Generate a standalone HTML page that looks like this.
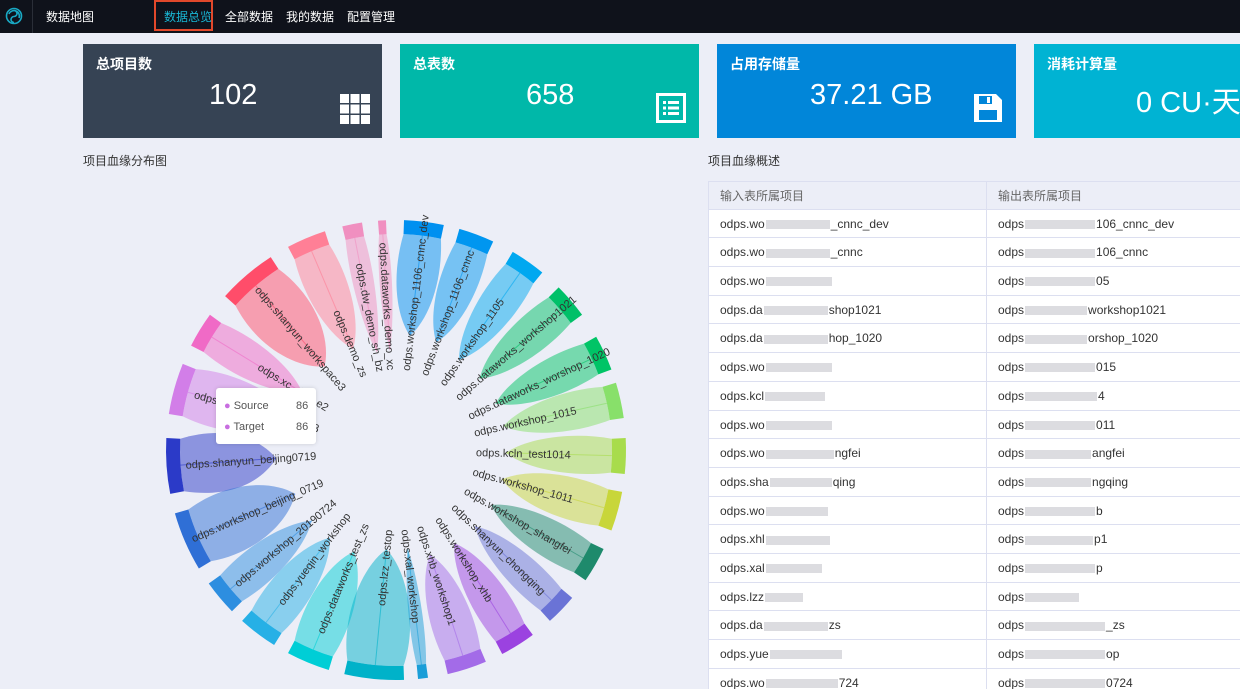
<!DOCTYPE html>
<html><head><meta charset="utf-8"><style>
*{margin:0;padding:0;box-sizing:border-box}
html,body{width:1240px;height:689px;overflow:hidden}
body{background:#eceef7;font-family:"Liberation Sans","Noto Sans CJK SC",sans-serif;position:relative}
.nav{position:absolute;left:0;top:0;width:1240px;height:33px;background:#0f121b;color:#fff;font-size:12px}
.nav .sep{position:absolute;left:32px;top:0;width:1px;height:33px;background:#2a2e38}
.nav span{position:absolute;top:8px}
.card{position:absolute;top:44px;height:94px;color:#fff;overflow:hidden}
.card .t{position:absolute;left:13px;top:10px;font-size:14px;font-weight:bold}
.card .v{position:absolute;top:35px;font-size:29px;white-space:nowrap}
.h{position:absolute;font-size:12px;color:#333}
.tb{position:absolute;left:708px;top:181px;width:540px;font-size:12px;color:#333}
.r{height:28.7px;border-bottom:1px solid #dcdff0;background:#fff;position:relative;white-space:nowrap;line-height:28px}
.r.hd{background:#eceef7;color:#666;border-top:1px solid #dcdff0}
.c1{position:absolute;left:0;top:0;width:279px;height:28px;padding-left:11px;border-left:1px solid #dcdff0;border-right:1px solid #dcdff0}
.c2{position:absolute;left:290px;top:0}
.b{display:inline-block;height:9px;background:#dcdce0;vertical-align:middle;margin:0 1px}
</style></head><body>
<div class="nav">
<svg style="position:absolute;left:5px;top:7px" width="18" height="18" viewBox="0 0 18 18" fill="none" stroke="#19a9c4" stroke-width="1.6"><circle cx="9" cy="9" r="7.5"/><path d="M9 3.5a3 3 0 0 1 0 6a3 3 0 0 0 0 6M4 7a5 5 0 0 1 10 4"/></svg>
<div class="sep"></div>
<span style="left:46px">数据地图</span>
<div style="position:absolute;left:154px;top:0;width:59px;height:31px;border:2px solid #e2482b"></div>
<span style="left:164px;color:#19b7d6">数据总览</span>
<span style="left:225px">全部数据</span>
<span style="left:286px">我的数据</span>
<span style="left:347px">配置管理</span>
</div>

<div class="card" style="left:83px;width:299px;background:#364354"><div class="t">总项目数</div><div class="v" style="left:126px">102</div>
<svg style="position:absolute;left:257px;top:50px" width="30" height="30"><g fill="#fff"><rect x="0" y="0" width="9" height="9"/><rect x="10.5" y="0" width="9" height="9"/><rect x="21" y="0" width="9" height="9"/><rect x="0" y="10.5" width="9" height="9"/><rect x="10.5" y="10.5" width="9" height="9"/><rect x="21" y="10.5" width="9" height="9"/><rect x="0" y="21" width="9" height="9"/><rect x="10.5" y="21" width="9" height="9"/><rect x="21" y="21" width="9" height="9"/></g></svg></div>
<div class="card" style="left:400px;width:299px;background:#00b8a9"><div class="t">总表数</div><div class="v" style="left:126px">658</div>
<svg style="position:absolute;left:256px;top:49px" width="30" height="30"><rect x="1.5" y="1.5" width="27" height="27" fill="none" stroke="#fff" stroke-width="3"/><g fill="#fff"><rect x="7" y="8" width="3" height="3"/><rect x="12" y="8" width="11" height="3"/><rect x="7" y="13.5" width="3" height="3"/><rect x="12" y="13.5" width="11" height="3"/><rect x="7" y="19" width="3" height="3"/><rect x="12" y="19" width="11" height="3"/></g></svg></div>
<div class="card" style="left:717px;width:299px;background:#0186d9"><div class="t">占用存储量</div><div class="v" style="left:93px">37.21 GB</div>
<svg style="position:absolute;left:257px;top:50px" width="28" height="28"><path d="M0 0H22L28 6V28H0Z" fill="#fff"/><rect x="5" y="2" width="13" height="8" fill="#0186d9"/><rect x="13" y="3" width="3" height="6" fill="#fff"/><rect x="5" y="16" width="18" height="10" fill="#0186d9"/></svg></div>
<div class="card" style="left:1034px;width:206px;background:#00b3d3"><div class="t">消耗计算量</div><div class="v" style="left:102px">0 CU·天</div></div>

<div class="h" style="left:83px;top:152px">项目血缘分布图</div>
<div class="h" style="left:708px;top:152px">项目血缘概述</div>

<svg id="ch" style="position:absolute;left:0;top:0" width="700" height="689"></svg>
<div style="position:absolute;left:216px;top:388px;width:100px;height:56px;background:#fff;border-radius:3px;box-shadow:0 0 4px rgba(0,0,0,.15);font-size:11px;color:#555">
<div style="position:absolute;left:8px;top:12px"><span style="color:#c86ee0">●</span> Source</div><div style="position:absolute;left:80px;top:12px">86</div>
<div style="position:absolute;left:8px;top:33px"><span style="color:#c86ee0">●</span> Target</div><div style="position:absolute;left:80px;top:33px">86</div></div>

<div class="tb">
<div class="r hd"><div class="c1">输入表所属项目</div><div class="c2">输出表所属项目</div></div>
<div class="r"><div class="c1">odps.wo<i class="b" style="width:64px"></i>_cnnc_dev</div><div class="c2">odps<i class="b" style="width:70px"></i>106_cnnc_dev</div></div>
<div class="r"><div class="c1">odps.wo<i class="b" style="width:64px"></i>_cnnc</div><div class="c2">odps<i class="b" style="width:70px"></i>106_cnnc</div></div>
<div class="r"><div class="c1">odps.wo<i class="b" style="width:66px"></i></div><div class="c2">odps<i class="b" style="width:70px"></i>05</div></div>
<div class="r"><div class="c1">odps.da<i class="b" style="width:64px"></i>shop1021</div><div class="c2">odps<i class="b" style="width:62px"></i>workshop1021</div></div>
<div class="r"><div class="c1">odps.da<i class="b" style="width:64px"></i>hop_1020</div><div class="c2">odps<i class="b" style="width:62px"></i>orshop_1020</div></div>
<div class="r"><div class="c1">odps.wo<i class="b" style="width:66px"></i></div><div class="c2">odps<i class="b" style="width:70px"></i>015</div></div>
<div class="r"><div class="c1">odps.kcl<i class="b" style="width:60px"></i></div><div class="c2">odps<i class="b" style="width:72px"></i>4</div></div>
<div class="r"><div class="c1">odps.wo<i class="b" style="width:66px"></i></div><div class="c2">odps<i class="b" style="width:70px"></i>011</div></div>
<div class="r"><div class="c1">odps.wo<i class="b" style="width:68px"></i>ngfei</div><div class="c2">odps<i class="b" style="width:66px"></i>angfei</div></div>
<div class="r"><div class="c1">odps.sha<i class="b" style="width:62px"></i>qing</div><div class="c2">odps<i class="b" style="width:66px"></i>ngqing</div></div>
<div class="r"><div class="c1">odps.wo<i class="b" style="width:62px"></i></div><div class="c2">odps<i class="b" style="width:70px"></i>b</div></div>
<div class="r"><div class="c1">odps.xhl<i class="b" style="width:64px"></i></div><div class="c2">odps<i class="b" style="width:68px"></i>p1</div></div>
<div class="r"><div class="c1">odps.xal<i class="b" style="width:56px"></i></div><div class="c2">odps<i class="b" style="width:70px"></i>p</div></div>
<div class="r"><div class="c1">odps.lzz<i class="b" style="width:38px"></i></div><div class="c2">odps<i class="b" style="width:54px"></i></div></div>
<div class="r"><div class="c1">odps.da<i class="b" style="width:64px"></i>zs</div><div class="c2">odps<i class="b" style="width:80px"></i>_zs</div></div>
<div class="r"><div class="c1">odps.yue<i class="b" style="width:72px"></i></div><div class="c2">odps<i class="b" style="width:80px"></i>op</div></div>
<div class="r"><div class="c1">odps.wo<i class="b" style="width:72px"></i>724</div><div class="c2">odps<i class="b" style="width:80px"></i>0724</div></div>
</div>

<script>
var cx=396,cy=450,R0=216,R1=230;
var g=[
["odps.dataworks_demo_xc",-4.5,-2.5,"#f08fc0",100],
["odps.dw_demo_sh_bz",-13.5,-8.5,"#f08fc0",100],
["odps.demo_zs",-28,-18,"#ff7f96",110],
["odps.shanyun_workspace3",-48,-33,"#ff4d6a",110],
["odps.xc_dpe_e2",-63,-54,"#f06ac6",110],
["odps.workshop_20190808",-81,-68,"#d27ee8",100],
["odps.shanyun_beijing0719",-101,-87,"#2b3ac8",120],
["odps.workshop_beijing_0719",-121,-106,"#2f6fd6",110],
["odps.workshop_20190724",-134.5,-125.5,"#2d8ee0",110],
["odps.yueqin_workshop",-148,-138,"#26b0e6",110],
["odps.dataworks_test_zs",-163,-152,"#00ced6",110],
["odps.lzz_testop",-182,-167,"#00b2c9",100],
["odps.xal_workshop",172,174.5,"#1a9ed8",100],
["odps.xhb_workshop1",157,167,"#a36be8",110],
["odps.workshop_xhb",143.5,152.5,"#9b42e0",110],
["odps.shanyun_chongqing",130,138,"#6a73d6",110],
["odps.workshop_shangfei",115.5,124.5,"#1e8a6c",110],
["odps.workshop_1011",100.5,110.5,"#c8d63a",110],
["odps.kcln_test1014",87,96,"#a8dc4c",110],
["odps.workshop_1015",73,82,"#88e06a",110],
["odps.dataworks_worshop_1020",60.5,69.5,"#00c466",110],
["odps.dataworks_workshop1021",45,54,"#00c068",110],
["odps.workshop_1105",30.5,39.5,"#00a8f0",110],
["odps.workshop_1106_cnnc",16,25,"#0096f0",115],
["odps.workshop_1106_cnnc_dev",2,12,"#0090f0",115]];
function P(a,r){a=a*Math.PI/180;return [cx+r*Math.sin(a),cy-r*Math.cos(a)];}
var s="";
g.forEach(function(d){
 var a0=d[1],a1=d[2],m=(a0+a1)/2,tip=d[4],w=(a1-a0);
 var p=P(a0,R1),q=P(a1,R1),p2=P(a1,R0),q2=P(a0,R0);
 s+='<path d="M'+p+'A'+R1+' '+R1+' 0 0 1 '+q+'L'+p2+'A'+R0+' '+R0+' 0 0 0 '+q2+'Z" fill="'+d[3]+'"/>';
 var t=P(m,tip),b=Math.max(2,w*0.35);
 var c1a=P(a1+b,175),c1b=P(a1+b*0.6,tip+20),c0b=P(a0-b*0.6,tip+20),c0a=P(a0-b,175);
 s+='<path d="M'+q2+'A'+R0+' '+R0+' 0 0 1 '+p2+'C'+c1a+' '+c1b+' '+t+'C'+c0b+' '+c0a+' '+q2+'Z" fill="'+d[3]+'" fill-opacity="0.5"/>';
 s+='<line x1="'+P(m,R0)[0]+'" y1="'+P(m,R0)[1]+'" x2="'+t[0]+'" y2="'+t[1]+'" stroke="'+d[3]+'" stroke-opacity="0.6"/>';
 var L=P(m,80),right=(m>0&&m<180);
 var rot=right?m-90:m+90;
 s+='<text x="'+L[0]+'" y="'+L[1]+'" dy="4" font-size="11" fill="#333" text-anchor="'+(right?'start':'end')+'" transform="rotate('+rot+' '+L[0]+' '+L[1]+')">'+d[0]+'</text>';
});
document.getElementById("ch").innerHTML=s;
</script>
</body></html>
